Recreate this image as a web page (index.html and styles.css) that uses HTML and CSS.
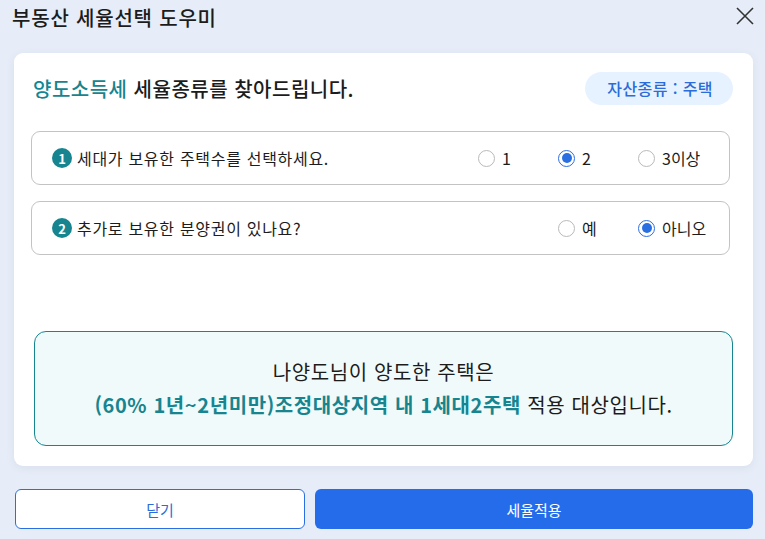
FILE: index.html
```html
<!DOCTYPE html>
<html lang="ko">
<head>
    <meta charset="UTF-8">
    <meta name="viewport" content="width=device-width, initial-scale=1.0">
    <title>부동산 세율선택 도우미</title>
    <link rel="stylesheet" href="styles.css">
</head>
<body>
    <div class="popup">
        <div class="popup-header">
            <h1>부동산 세율선택 도우미</h1>
            <button class="close-btn" aria-label="닫기">
                <svg width="18" height="18" viewBox="0 0 18 18">
                    <path d="M1 1 L17 17 M17 1 L1 17" stroke="#333" stroke-width="1.6" fill="none"/>
                </svg>
            </button>
        </div>

        <div class="card">
            <div class="card-top">
                <h2><span class="accent">양도소득세</span> 세율종류를 찾아드립니다.</h2>
                <span class="tag">자산종류 : 주택</span>
            </div>

            <div class="question">
                <div class="q-text"><span class="num">1</span>세대가 보유한 주택수를 선택하세요.</div>
                <div class="options">
                    <label class="opt"><span class="radio"></span>1</label>
                    <label class="opt"><span class="radio checked"></span>2</label>
                    <label class="opt"><span class="radio"></span>3이상</label>
                </div>
            </div>

            <div class="question">
                <div class="q-text"><span class="num">2</span>추가로 보유한 분양권이 있나요?</div>
                <div class="options">
                    <label class="opt"><span class="radio"></span>예</label>
                    <label class="opt"><span class="radio checked"></span>아니오</label>
                </div>
            </div>

            <div class="result">
                <p>나양도님이 양도한 주택은</p>
                <p><strong>(60% 1년~2년미만)조정대상지역 내 1세대2주택</strong> 적용 대상입니다.</p>
            </div>
        </div>

        <div class="actions">
            <button class="btn btn-line">닫기</button>
            <button class="btn btn-fill">세율적용</button>
        </div>
    </div>
</body>
</html>
```

FILE: styles.css
```css
* {
    box-sizing: border-box;
}
body {
    margin: 0;
    background: #e6edf8;
    font-family: "Noto Sans CJK KR", "Noto Sans", sans-serif;
    color: #1c1c1c;
}
.popup {
    width: 765px;
    height: 539px;
    display: flex;
    flex-direction: column;
}
.popup-header {
    height: 53px;
    display: flex;
    align-items: flex-start;
    justify-content: space-between;
    padding: 4px 11px 0 12px;
}
.popup-header h1 {
    margin: 0;
    font-size: 20px;
    font-weight: 500;
    line-height: 28px;
    letter-spacing: 0.8px;
}
.close-btn {
    border: none;
    background: none;
    padding: 3px 0 0;
    cursor: pointer;
}
.card {
    margin: 0 12px 0 14px;
    height: 413px;
    background: #fff;
    border-radius: 9px;
    box-shadow: 0 2px 8px rgba(60, 80, 120, 0.08);
    padding: 19px 20px 22px 17px;
}
.card-top {
    display: flex;
    align-items: center;
    justify-content: space-between;
    height: 33px;
    margin-bottom: 26px;
}
.card-top h2 {
    margin: 0 0 0 2px;
    font-size: 20px;
    font-weight: 500;
    letter-spacing: 0.5px;
}
.accent {
    color: #16858f;
}
.tag {
    background: #e6f2ff;
    color: #2a6cd9;
    font-size: 16px;
    font-weight: 500;
    letter-spacing: 0.4px;
    height: 33px;
    line-height: 33px;
    padding: 0 20px 0 22px;
    border-radius: 17px;
}
.question {
    height: 54px;
    margin-right: 3px;
    margin-bottom: 16px;
    border: 1px solid #c3c3c3;
    border-radius: 9px;
    display: flex;
    align-items: center;
    justify-content: space-between;
    padding: 0 11px 0 20px;
}
.q-text {
    display: flex;
    align-items: center;
    font-size: 16px;
    letter-spacing: 0.7px;
}
.num {
    width: 20px;
    height: 20px;
    border-radius: 50%;
    background: #16858f;
    color: #fff;
    font-size: 13px;
    font-weight: 700;
    letter-spacing: 0;
    display: flex;
    align-items: center;
    justify-content: center;
    margin-right: 5px;
}
.options {
    display: flex;
}
.opt {
    width: 80px;
    display: flex;
    align-items: center;
    font-size: 16px;
    cursor: pointer;
}
.radio {
    width: 17px;
    height: 17px;
    border: 1px solid #b9b9b9;
    border-radius: 50%;
    margin-right: 7px;
    background: #fff;
    display: flex;
    align-items: center;
    justify-content: center;
}
.radio.checked {
    border-color: #2a6fe2;
}
.radio.checked::after {
    content: "";
    width: 10px;
    height: 10px;
    border-radius: 50%;
    background: #2a6fe2;
}
.result {
    margin: 76px 0 0 3px;
    height: 115px;
    background: #f1fafa;
    border: 1px solid #16858f;
    border-radius: 12px;
    display: flex;
    flex-direction: column;
    justify-content: center;
    align-items: center;
    padding-bottom: 2px;
}
.result p {
    margin: 0;
    font-size: 20px;
    line-height: 33px;
    letter-spacing: 0.6px;
}
.result strong {
    color: #16858f;
    font-weight: 700;
}
.actions {
    display: flex;
    gap: 10px;
    margin: 23px 12px 0 15px;
}
.btn {
    height: 40px;
    border-radius: 6px;
    font-family: inherit;
    font-size: 15px;
    cursor: pointer;
}
.btn-line {
    flex: 0 0 290px;
    background: #fff;
    border: 1px solid #2a6fe2;
    color: #2a6cd9;
}
.btn-fill {
    flex: 1;
    background: #246cea;
    border: none;
    color: #fff;
}
```
